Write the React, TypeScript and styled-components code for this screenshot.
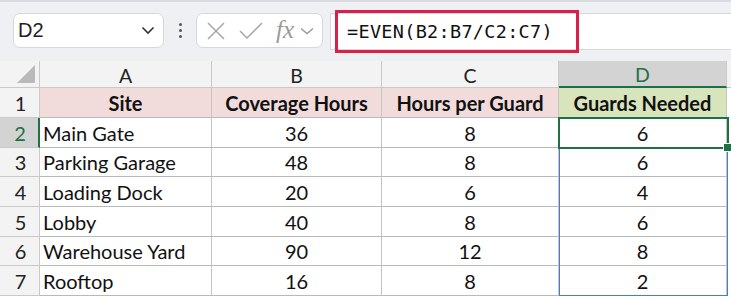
import { Fragment } from "react";
import styled, { createGlobalStyle } from "styled-components";

const Global = createGlobalStyle`
  html, body { margin: 0; padding: 0; background: #ffffff; }
  body { width: 731px; height: 300px; overflow: hidden; font-family: "Lato", "Liberation Sans", sans-serif; }
`;

const Toolbar = styled.div`
  height: 61px;
  background: #eef0f3;
  border-top: 2px solid #d9dbde;
  box-sizing: border-box;
  display: flex;
  align-items: flex-start;
  padding: 11px 0 0 13px;
`;

const NameBox = styled.div`
  width: 151px;
  height: 35px;
  box-sizing: border-box;
  background: #fff;
  border: 1px solid #d6d8db;
  border-radius: 7px;
  display: flex;
  align-items: center;
  justify-content: space-between;
  padding: 0 8px 0 4px;
  font-family: "Liberation Sans", Arial, sans-serif;
  font-size: 20px;
  color: #222;
`;

const Dots = styled.div`
  width: 32px;
  height: 35px;
  display: flex;
  flex-direction: column;
  align-items: center;
  justify-content: center;
  gap: 3px;
  span {
    width: 3px;
    height: 3px;
    border-radius: 50%;
    background: #555;
  }
`;

const FxBox = styled.div`
  width: 127px;
  height: 35px;
  box-sizing: border-box;
  background: #fff;
  border: 1px solid #d6d8db;
  border-radius: 7px;
  display: flex;
  align-items: center;
  padding: 0 4px 0 9px;
  gap: 12px;
`;

const Fx = styled.span`
  font-family: "Liberation Serif", "Times New Roman", serif;
  font-style: italic;
  font-size: 25px;
  line-height: 1;
  color: #9a9a9a;
  margin-right: -6px;
  margin-top: -3px;
`;

const FormulaBar = styled.div`
  flex: 1;
  margin-left: 7px;
  height: 37px;
  background: #fff;
  border-top: 1px solid #d6d8db;
  border-bottom: 1px solid #d6d8db;
  border-left: 1px solid #d6d8db;
  box-sizing: border-box;
  position: relative;
  display: flex;
  align-items: center;
`;

const Highlight = styled.div`
  position: absolute;
  left: 4px;
  top: -4px;
  width: 244px;
  height: 43px;
  border: 3px solid #dc1e48;
  box-sizing: border-box;
`;

const FormulaText = styled.span`
  font-family: "DejaVu Sans Mono", "Liberation Mono", monospace;
  font-size: 18.5px;
  letter-spacing: 0.3px;
  color: #111;
  padding-left: 16px;
`;

const Sheet = styled.div`
  position: relative;
  display: grid;
  grid-template-columns: 40px 172px 170px 177px 168px 1fr;
  grid-template-rows: 27px 30px 30px 29px 30px 30px 29px 30px;
`;

const Corner = styled.div`
  background: #f3f3f3;
  border-right: 1px solid #c9c9c9;
  border-bottom: 1px solid #c9c9c9;
  position: relative;
  &::after {
    content: "";
    position: absolute;
    right: 4px;
    bottom: 4px;
    border-style: solid;
    border-width: 0 0 18px 18px;
    border-color: transparent transparent #b9b9b9 transparent;
  }
`;

const ColHead = styled.div<{ $active?: boolean }>`
  background: ${(p) => (p.$active ? "#d3d3d3" : "#f3f3f3")};
  color: ${(p) => (p.$active ? "#1e7145" : "#222")};
  border-right: 1px solid #c9c9c9;
  border-bottom: ${(p) => (p.$active ? "2px solid #1e7145" : "1px solid #c9c9c9")};
  display: flex;
  align-items: center;
  justify-content: center;
  font-size: 19.5px;
  padding-top: 2px;
`;

const Filler = styled.div<{ $head?: boolean }>`
  background: ${(p) => (p.$head ? "#f3f3f3" : "#fff")};
  border-bottom: ${(p) => (p.$head ? "1px solid #c9c9c9" : "none")};
`;

const RowHead = styled.div<{ $active?: boolean }>`
  background: ${(p) => (p.$active ? "#d3d3d3" : "#f3f3f3")};
  color: ${(p) => (p.$active ? "#1e7145" : "#222")};
  border-right: ${(p) => (p.$active ? "2px solid #1e7145" : "1px solid #c9c9c9")};
  border-bottom: 1px solid #c9c9c9;
  display: flex;
  align-items: center;
  justify-content: center;
  font-size: 20px;
  padding-left: 2px;
`;

const Cell = styled.div<{ $align?: "left" | "center"; $bg?: string; $bold?: boolean }>`
  background: ${(p) => p.$bg ?? "#fff"};
  border-right: 1px solid #c4c4c4;
  border-bottom: 1px solid #b9b9b9;
  display: flex;
  align-items: center;
  justify-content: ${(p) => (p.$align === "left" ? "flex-start" : "center")};
  padding-left: ${(p) => (p.$align === "left" ? "3px" : "0")};
  font-size: 20px;
  font-weight: ${(p) => (p.$bold ? 700 : 400)};
  color: #111;
  white-space: nowrap;
  overflow: hidden;
`;

const RangeBox = styled.div`
  position: absolute;
  left: 559px;
  top: 57px;
  width: 169px;
  height: 178px;
  border: 1.5px solid #4a7bd0;
  box-sizing: border-box;
  pointer-events: none;
`;

const ActiveBox = styled.div`
  position: absolute;
  left: 558px;
  top: 56px;
  width: 171px;
  height: 32px;
  border: 2px solid #1e7145;
  box-sizing: border-box;
  &::after {
    content: "";
    position: absolute;
    right: -5px;
    bottom: -5px;
    width: 7px;
    height: 7px;
    background: #1e7145;
    border: 1px solid #fff;
  }
`;

const rows = [
  ["Main Gate", 36, 8, 6],
  ["Parking Garage", 48, 8, 6],
  ["Loading Dock", 20, 6, 4],
  ["Lobby", 40, 8, 6],
  ["Warehouse Yard", 90, 12, 8],
  ["Rooftop", 16, 8, 2],
] as const;

export default function App() {
  return (
    <>
      <Global />
      <Toolbar>
        <NameBox>
          <span>D2</span>
          <svg width="14" height="9" viewBox="0 0 14 9">
            <path d="M1.5 1.5 L7 7 L12.5 1.5" fill="none" stroke="#333" strokeWidth="1.6" />
          </svg>
        </NameBox>
        <Dots>
          <span />
          <span />
          <span />
        </Dots>
        <FxBox>
          <svg width="20" height="20" viewBox="0 0 20 20">
            <path d="M2 2 L18 18 M18 2 L2 18" stroke="#a6a6a6" strokeWidth="1.5" fill="none" />
          </svg>
          <svg width="26" height="20" viewBox="0 0 26 20">
            <path d="M2 10 L9 17 L24 2" stroke="#a6a6a6" strokeWidth="1.5" fill="none" />
          </svg>
          <Fx>fx</Fx>
          <svg width="14" height="8" viewBox="0 0 14 8">
            <path d="M1 1.5 L7 6.5 L13 1.5" fill="none" stroke="#9a9a9a" strokeWidth="1.4" />
          </svg>
        </FxBox>
        <FormulaBar>
          <Highlight />
          <FormulaText>=EVEN(B2:B7/C2:C7)</FormulaText>
        </FormulaBar>
      </Toolbar>
      <Sheet>
        <Corner />
        <ColHead>A</ColHead>
        <ColHead>B</ColHead>
        <ColHead>C</ColHead>
        <ColHead $active>D</ColHead>
        <Filler $head />

        <RowHead>1</RowHead>
        <Cell $bg="#f2dcdb" $bold>Site</Cell>
        <Cell $bg="#f2dcdb" $bold>Coverage Hours</Cell>
        <Cell $bg="#f2dcdb" $bold>Hours per Guard</Cell>
        <Cell $bg="#d8e4bc" $bold>Guards Needed</Cell>
        <Filler />

        {rows.map((r, i) => (
          <Fragment key={i}>
            <RowHead $active={i === 0}>{i + 2}</RowHead>
            <Cell $align="left">{r[0]}</Cell>
            <Cell>{r[1]}</Cell>
            <Cell>{r[2]}</Cell>
            <Cell>{r[3]}</Cell>
            <Filler />
          </Fragment>
        ))}
        <RangeBox />
        <ActiveBox />
      </Sheet>
    </>
  );
}
